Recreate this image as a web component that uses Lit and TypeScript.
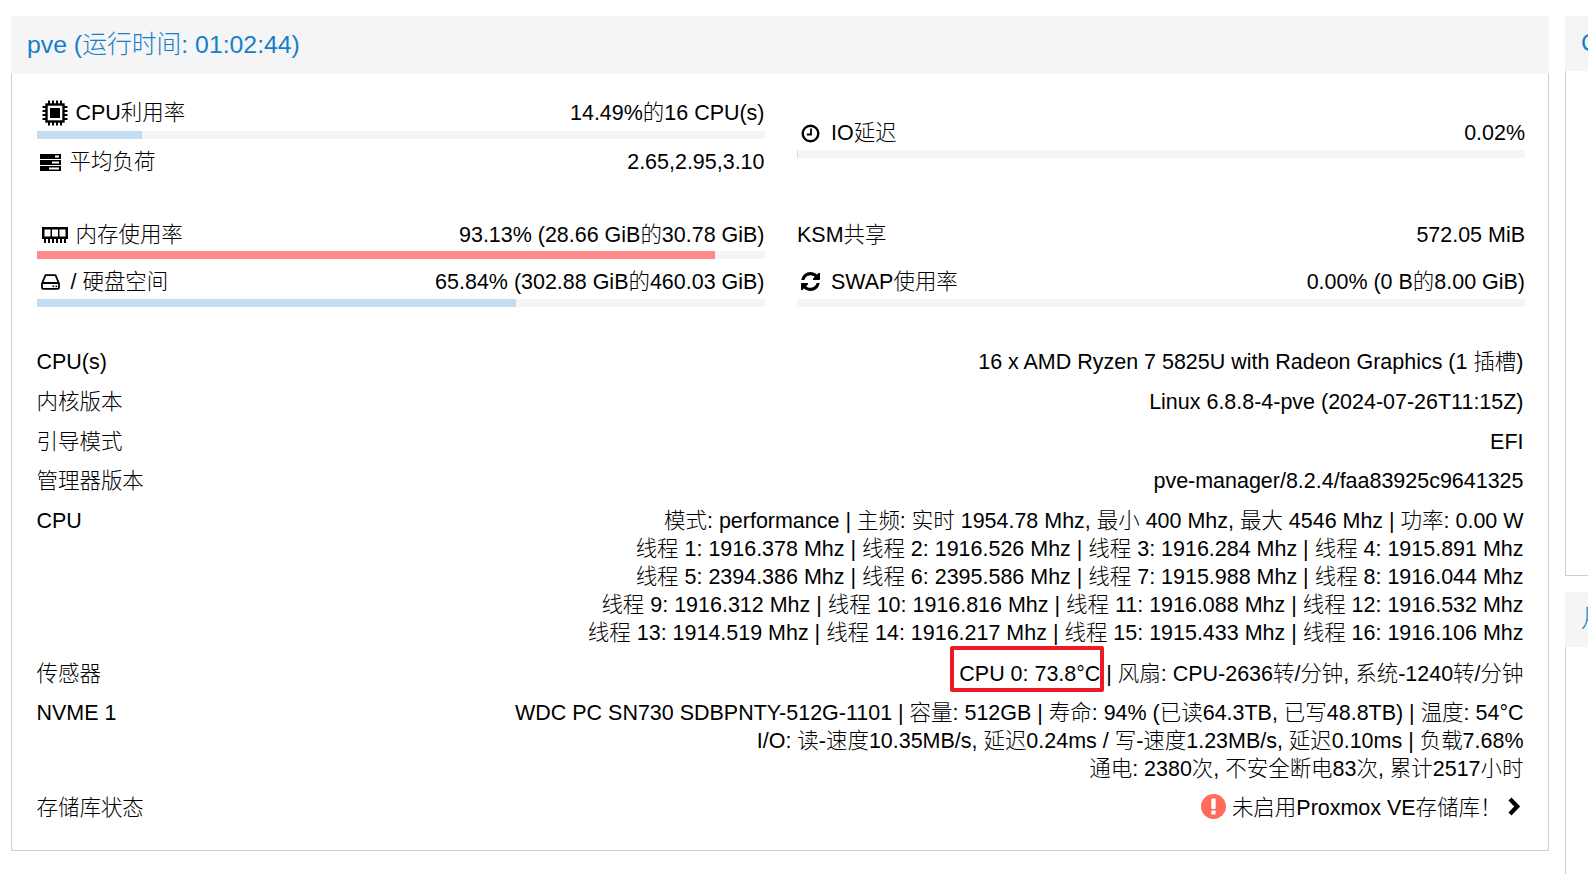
import { LitElement, html, css, svg } from "lit";
import { customElement } from "lit/decorators.js";

const refreshPath =
  "M1639 1056q0 5-1 7-64 268-268 434.5t-478 166.5q-146 0-282.5-55t-243.5-157l-129 129q-19 19-45 19t-45-19-19-45v-448q0-26 19-45t45-19h448q26 0 45 19t19 45-19 45l-137 137q71 66 161 102t187 36q134 0 250-65t186-179q11-17 53-117 8-23 30-23h192q13 0 22.5 9.5t9.5 22.5zm25-800v448q0 26-19 45t-45 19h-448q-26 0-45-19t-19-45 19-45l138-138q-148-137-349-137-134 0-250 65t-186 179q-11 17-53 117-8 23-30 23h-199q-13 0-22.5-9.5t-9.5-22.5v-7q65-268 270-434.5t480-166.5q146 0 284 55.5t245 156.5l130-129q19-19 45-19t45 19 19 45z";

const icons = {
  cpu: html`<svg class="i-cpu" viewBox="0 0 26 26">
    <rect x="4.5" y="4.5" width="17" height="17" fill="none" stroke="#000" stroke-width="2.4"/>
    <rect x="8" y="8" width="10" height="10" fill="#000"/>
    ${[6, 10, 14, 18].map(
      (p) => svg`<rect x="${p}" y="0.5" width="2" height="4" fill="#000"/>
      <rect x="${p}" y="21.5" width="2" height="4" fill="#000"/>
      <rect x="0.5" y="${p}" width="4" height="2" fill="#000"/>
      <rect x="21.5" y="${p}" width="4" height="2" fill="#000"/>`
    )}
  </svg>`,
  load: html`<svg class="i-load" viewBox="0 0 21 17">
    ${[0, 6, 12].map(
      (y) => svg`<rect x="0" y="${y}" width="21" height="5" fill="#000"/>
      <rect x="${y === 6 ? 12 : y === 0 ? 15 : 9}" y="${y + 1.5}" width="${y === 6 ? 7 : y === 0 ? 4 : 10}" height="2" fill="#fff"/>`
    )}
  </svg>`,
  mem: html`<svg class="i-mem" viewBox="0 0 26 16">
    <path fill="#000" fill-rule="evenodd" d="M0 0h26v12h-26zM2.500 2.500v7h6v-7zM10 2.500v7h6v-7zM17.500 2.500v7h6v-7z"/>
    ${[1, 5, 9, 13, 17, 21].map((x) => svg`<rect x="${x + 1}" y="12" width="2" height="4" fill="#000"/>`)}
  </svg>`,
  disk: html`<svg class="i-disk" viewBox="0 0 19 16">
    <path fill="none" stroke="#000" stroke-width="1.800" stroke-linejoin="round" d="M1 9.500 4.500 1.200h10l3.500 8.300v4c0 .8-.6 1.400-1.400 1.400H2.400c-.8 0-1.400-.6-1.400-1.400zM1 9h17"/>
    <rect x="11.500" y="11.500" width="1.600" height="1.600" fill="#000"/>
    <rect x="14.500" y="11.500" width="1.600" height="1.600" fill="#000"/>
  </svg>`,
  clock: html`<svg class="i-clock" viewBox="0 0 19 19">
    <circle cx="9.500" cy="9.500" r="7.800" fill="none" stroke="#000" stroke-width="2.400"/>
    <path d="M10 4.500v6H5.800" fill="none" stroke="#000" stroke-width="1.800"/>
  </svg>`,
  sync: html`<svg class="i-sync" viewBox="128 128 1536 1536">
    <path fill="#000" d="${refreshPath}"/>
  </svg>`,
  alert: html`<svg class="i-alert" viewBox="0 0 25 25">
    <circle cx="12.500" cy="12.500" r="12.500" fill="#ff6c59"/>
    <rect x="10.300" y="4.500" width="4.400" height="10.500" rx="1" fill="#fff"/>
    <rect x="10.300" y="16.500" width="4.400" height="4" rx="1" fill="#fff"/>
  </svg>`,
  chevron: html`<svg class="i-chev" viewBox="0 0 14 19">
    <path d="M3 2 10.200 9.500 3 17" fill="none" stroke="#000" stroke-width="4.200"/>
  </svg>`,
};

@customElement("app-root")
export class AppRoot extends LitElement {
  static styles = css`
    :host {
      display: block;
      width: 1588px;
      height: 874px;
      overflow: hidden;
      background: #fff;
      font-family: "Liberation Sans", "Noto Sans CJK SC", sans-serif;
      font-size: 21.47px;
      font-weight: 300;
      line-height: 28px;
      color: #000;
    }
    .page {
      display: flex;
      gap: 16px;
      padding: 16px 0 0 11px;
      width: 1900px;
      box-sizing: border-box;
    }
    .panel {
      display: flex;
      flex-direction: column;
    }
    .main {
      width: 1538px;
      flex: none;
      height: 835px;
    }
    .side {
      width: 320px;
      flex: none;
      display: flex;
      flex-direction: column;
      gap: 16px;
    }
    .head {
      background: #f5f5f5;
      color: #157fcc;
      font-size: 24.8px;
      height: 58px;
      line-height: 57px;
      padding-left: 16px;
      flex: none;
    }
    .side .head {
      height: 55px;
      line-height: 54px;
    }
    .body {
      flex: 1;
      border: 1px solid #cfcfcf;
      border-top: none;
      padding: 17px 24px 0 25px;
    }
    .side .s1 { height: 560px; }
    .side .s2 { height: 300px; }
    .side .body { border-right: none; }
    .gauges {
      display: grid;
      grid-template-columns: 728px 728px;
      grid-template-rows: 48px 48px 24px 48px 48px;
      column-gap: 32px;
    }
    .io { grid-column: 2; grid-row: 1 / span 2; padding-top: 19px; }
    .mem { grid-row: 4; }
    .disk { grid-row: 5; }
    .g-head {
      display: flex;
      justify-content: space-between;
      height: 40px;
      padding: 8px 0.5px 0 0;
      margin-left: -0.5px;
      box-sizing: border-box;
    }
    .right .g-head { margin-left: 0; padding-right: 0; }
    .io .g-head, .disk .g-head, .load .g-head { padding-top: 9px; }
    .mem .g-head { padding-top: 10px; }
    .g-label { display: flex; align-items: center; height: 28px; white-space: pre; }
    .bar { height: 8px; background: #f5f5f5; }
    .fill { height: 100%; background: #c2ddf2; }
    .fill.warn { background: #ff8a8a; }
    svg { flex: none; display: block; }
    .i-cpu { width: 26px; height: 26px; margin: 0 8px 0 5px; }
    .i-load { width: 21px; height: 17px; margin: 0 9px 0 3px; }
    .i-mem { width: 26px; height: 16px; margin: 0 8px 0 5px; }
    .i-disk { width: 19px; height: 16px; margin: 0 11px 0 4px; }
    .i-clock { width: 19px; height: 19px; margin: 0 11px 0 4px; }
    .i-sync { width: 19px; height: 19px; margin: 0 11px 2px 4px; }
    .i-alert { width: 25px; height: 25px; margin: 0 6px 3px 0; }
    .i-chev { width: 14px; height: 19px; margin: 0 3px 3px 5px; }
    .info {
      display: flex;
      flex-direction: column;
      gap: 11.75px;
      margin: 41px 0.5px 0 -0.5px;
    }
    .row {
      display: flex;
      justify-content: space-between;
    }
    .row.sensor { margin: 1px 0 -1px; }
    .val { text-align: right; white-space: pre; }
    .alert { display: flex; align-items: center; }
    .mark { position: relative; display: inline-block; }
    .mark::after {
      content: "";
      position: absolute;
      left: -9px;
      right: -4px;
      top: -14px;
      bottom: -4px;
      border: 4px solid #ed1c24;
      border-radius: 2px;
    }
  `;

  private gauge(icon: unknown, label: string, value: string, pct: number | null, cls = "", warn = false) {
    return html`<div class=${cls}>
      <div class="g-head">
        <div class="g-label">${icon}${label}</div>
        <div>${value}</div>
      </div>
      ${pct === null
        ? ""
        : html`<div class="bar"><div class="fill ${warn ? "warn" : ""}" style="width:${pct}%"></div></div>`}
    </div>`;
  }

  render() {
    return html`<div class="page">
      <section class="panel main">
        <div class="head">pve (运行时间: 01:02:44)</div>
        <div class="body">
          <div class="gauges">
            ${this.gauge(icons.cpu, "CPU利用率", "14.49%的16 CPU(s)", 14.49)}
            ${this.gauge(icons.clock, "IO延迟", "0.02%", 0.1, "io right")}
            ${this.gauge(icons.load, "平均负荷", "2.65,2.95,3.10", null, "load")}
            ${this.gauge(icons.mem, "内存使用率", "93.13% (28.66 GiB的30.78 GiB)", 93.13, "mem", true)}
            ${this.gauge(null, "KSM共享", "572.05 MiB", null, "mem right")}
            ${this.gauge(icons.disk, "/ 硬盘空间", "65.84% (302.88 GiB的460.03 GiB)", 65.84, "disk")}
            ${this.gauge(icons.sync, "SWAP使用率", "0.00% (0 B的8.00 GiB)", 0, "disk right")}
          </div>
          <div class="info">
            <div class="row"><div>CPU(s)</div><div class="val">16 x AMD Ryzen 7 5825U with Radeon Graphics (1 插槽)</div></div>
            <div class="row"><div>内核版本</div><div class="val">Linux 6.8.8-4-pve (2024-07-26T11:15Z)</div></div>
            <div class="row"><div>引导模式</div><div class="val">EFI</div></div>
            <div class="row"><div>管理器版本</div><div class="val">pve-manager/8.2.4/faa83925c9641325</div></div>
            <div class="row">
              <div>CPU</div>
              <div class="val">模式: performance | 主频: 实时 1954.78 Mhz, 最小 400 Mhz, 最大 4546 Mhz | 功率: 0.00 W
线程 1: 1916.378 Mhz | 线程 2: 1916.526 Mhz | 线程 3: 1916.284 Mhz | 线程 4: 1915.891 Mhz
线程 5: 2394.386 Mhz | 线程 6: 2395.586 Mhz | 线程 7: 1915.988 Mhz | 线程 8: 1916.044 Mhz
线程 9: 1916.312 Mhz | 线程 10: 1916.816 Mhz | 线程 11: 1916.088 Mhz | 线程 12: 1916.532 Mhz
线程 13: 1914.519 Mhz | 线程 14: 1916.217 Mhz | 线程 15: 1915.433 Mhz | 线程 16: 1916.106 Mhz</div>
            </div>
            <div class="row sensor">
              <div>传感器</div>
              <div class="val"><span class="mark">CPU 0: 73.8°C</span> | 风扇: CPU-2636转/分钟, 系统-1240转/分钟</div>
            </div>
            <div class="row">
              <div>NVME 1</div>
              <div class="val">WDC PC SN730 SDBPNTY-512G-1101 | 容量: 512GB | 寿命: 94% (已读64.3TB, 已写48.8TB) | 温度: 54°C
I/O: 读-速度10.35MB/s, 延迟0.24ms / 写-速度1.23MB/s, 延迟0.10ms | 负载7.68%
通电: 2380次, 不安全断电83次, 累计2517小时</div>
            </div>
            <div class="row">
              <div>存储库状态</div>
              <div class="alert">${icons.alert}未启用Proxmox VE存储库！${icons.chevron}</div>
            </div>
          </div>
        </div>
      </section>
      <div class="side">
        <section class="panel s1">
          <div class="head">CPU</div>
          <div class="body"></div>
        </section>
        <section class="panel s2">
          <div class="head">月</div>
          <div class="body"></div>
        </section>
      </div>
    </div>`;
  }
}
